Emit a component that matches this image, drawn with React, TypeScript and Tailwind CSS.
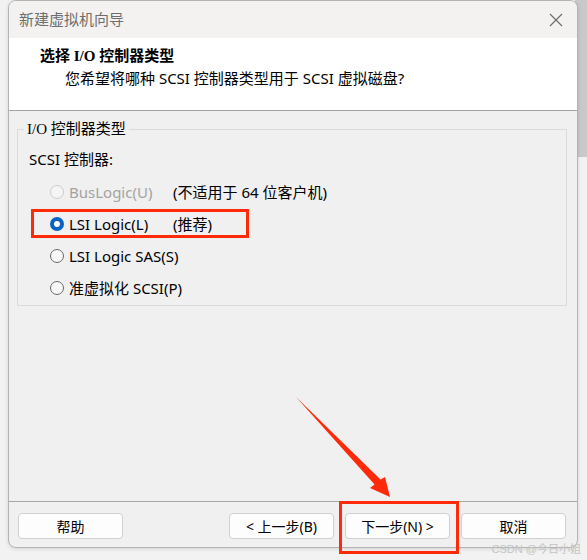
const sans = "font-['Noto_Sans','Noto_Sans_CJK_SC',sans-serif]"
const serif = "font-['Liberation_Serif','Noto_Sans_CJK_SC',serif]"

type RadioState = "checked" | "unchecked" | "disabled"

const options: { label: string; note?: string; state: RadioState }[] = [
  { label: "BusLogic(U)", note: "(不适用于 64 位客户机)", state: "disabled" },
  { label: "LSI Logic(L)", note: "(推荐)", state: "checked" },
  { label: "LSI Logic SAS(S)", state: "unchecked" },
  { label: "准虚拟化 SCSI(P)", state: "unchecked" },
]

function Radio({ state }: { state: RadioState }) {
  if (state === "checked") {
    return (
      <span className="w-[14px] h-[14px] rounded-full bg-[#0a63c2] flex items-center justify-center shrink-0">
        <span className="w-[6px] h-[6px] rounded-full bg-white" />
      </span>
    )
  }
  return (
    <span
      className={
        state === "disabled"
          ? "w-[14px] h-[14px] rounded-full border border-[#cbcbcb] bg-[#f5f5f5] shrink-0"
          : "w-[14px] h-[14px] rounded-full border border-[#6a6a6a] bg-[#f7f7f7] shrink-0"
      }
    />
  )
}

const buttons = ["< 上一步(B)", "下一步(N) >", "取消"]

export default function App() {
  return (
    <div className={`relative w-[587px] h-[560px] bg-[#f2f2f2] overflow-hidden ${sans}`}>
      {/* desktop behind the dialog */}
      <div className="absolute right-0 top-0 w-[12px] h-[157px] bg-[#c9c9c9]" />

      {/* dialog window */}
      <div className="relative ml-[8px] w-[570px] h-[548px] border border-[#b4b4b4] rounded-[8px] bg-[#f0f0f0] flex flex-col overflow-hidden shadow-[0_1px_4px_rgba(0,0,0,0.12)]">
        {/* title bar */}
        <div className="h-[37px] bg-[#f3f2f1] flex items-center justify-between pl-[10px] pr-[13px]">
          <span className="text-[15px] text-[#6e6e6e]">新建虚拟机向导</span>
          <svg width="16" height="16" viewBox="0 0 16 16">
            <path d="M2 2 L14 14 M14 2 L2 14" stroke="#6a6a6a" strokeWidth="1.1" fill="none" />
          </svg>
        </div>

        {/* header */}
        <div className="h-[73px] bg-white border-b border-[#a3a3a3] pt-[8px]">
          <div className={`pl-[31px] text-[15px] leading-[20px] font-bold text-black ${serif}`}>
            选择 I/O 控制器类型
          </div>
          <div className="pl-[56px] mt-[2px] text-[15px] leading-[20px] text-black">
            您希望将哪种 SCSI 控制器类型用于 SCSI 虚拟磁盘?
          </div>
        </div>

        {/* body */}
        <div className="flex-1 px-[8px] pt-[9px]">
          <fieldset className="w-[550px] h-[186px] border border-[#dadada]">
            <legend className={`ml-[6px] px-[3px] text-[15px] leading-[18px] text-black ${serif}`}>
              I/O 控制器类型
            </legend>
            <div className="pl-[11px] mt-[11px] text-[15px] leading-[20px] text-black">SCSI 控制器:</div>
            <div className="mt-[13px] flex flex-col gap-[12px] pl-[32px]">
              {options.map((o) => (
                <div key={o.label} className="h-[20px] flex items-center whitespace-nowrap">
                  <Radio state={o.state} />
                  <span
                    className={`ml-[5px] min-w-[104px] text-[15px] leading-[20px] ${
                      o.state === "disabled" ? "text-[#a3a3a3]" : "text-black"
                    }`}
                  >
                    {o.label}
                  </span>
                  {o.note && <span className="text-[15px] leading-[20px] text-black">{o.note}</span>}
                </div>
              ))}
            </div>
          </fieldset>
        </div>

        {/* footer */}
        <div className="h-[46px] border-t border-[#a8a8a8] flex items-start pt-[11px] pl-[9px] pr-[11px]">
          <button className="w-[105px] h-[26px] bg-[#fdfdfd] border border-[#d0d0d0] rounded-[4px] text-[14px] text-black">
            帮助
          </button>
          <div className="ml-auto flex gap-[11px]">
            {buttons.map((b) => (
              <button
                key={b}
                className="w-[105px] h-[26px] bg-[#fdfdfd] border border-[#d0d0d0] rounded-[4px] text-[14px] text-black"
              >
                {b}
              </button>
            ))}
          </div>
        </div>
      </div>

      {/* annotations */}
      <div className="absolute left-[31px] top-[209px] w-[218px] h-[29px] border-[3px] border-[#ff2a0a]" />
      <div className="absolute left-[339px] top-[501px] w-[120px] h-[53px] border-[3px] border-[#ff2a0a]" />
      <svg className="absolute left-0 top-0" width="587" height="560" viewBox="0 0 587 560">
        <polygon
          points="296,397 380.5,479.5 385,477 390,497 370,488 374.6,484.6"
          fill="#ff2a0a"
        />
      </svg>
      <div className="absolute right-[6px] top-[541px] text-[11px] text-[#c4c4c4] font-['Liberation_Sans','Noto_Sans_CJK_SC',sans-serif]">
        CSDN @今日小姐
      </div>
    </div>
  )
}
